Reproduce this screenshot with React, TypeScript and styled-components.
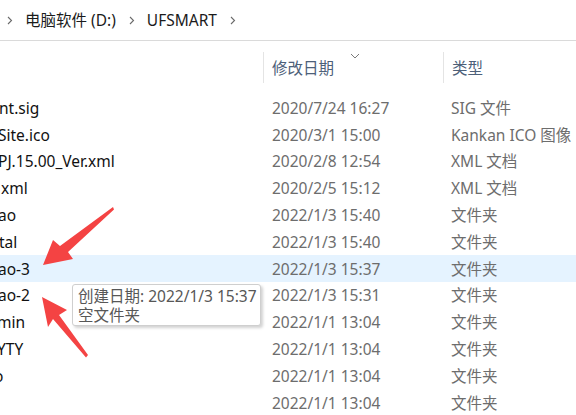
import React from "react";
import styled, { createGlobalStyle } from "styled-components";

const Global = createGlobalStyle`
  html, body { margin: 0; padding: 0; background: #fff; }
  body { overflow: hidden; font-family: "Noto Sans", "Noto Sans CJK SC", sans-serif; }
`;

const Page = styled.div`
  position: relative;
  width: 576px;
  height: 415px;
  overflow: hidden;
  background: #fff;
  display: flex;
  flex-direction: column;
`;

const Breadcrumb = styled.div`
  height: 41px;
  flex: none;
  border-bottom: 1px solid #dadada;
  display: flex;
  align-items: center;
  padding-left: 7px;
  box-sizing: border-box;
`;

const Crumb = styled.span`
  font-size: 15.5px;
  color: #1b1b1b;
  padding: 0 13px 0 12px;
  line-height: 20px;
`;

const Chevron = () => (
  <svg width="6" height="9" viewBox="0 0 6 9" style={{ flex: "none" }}>
    <path d="M1 1 L4.5 4.5 L1 8" fill="none" stroke="#6a6a6a" strokeWidth="1.1" />
  </svg>
);

const HeaderRow = styled.div`
  height: 53.5px;
  flex: none;
  display: grid;
  grid-template-columns: 263px 180px 1fr;
  align-items: start;
  padding-top: 11px;
  box-sizing: border-box;
`;

const HeaderCell = styled.div<{ $sep?: boolean }>`
  position: relative;
  height: 31px;
  display: flex;
  align-items: center;
  padding-left: 8px;
  border-left: ${(p) => (p.$sep ? "1px solid #e4e4e4" : "none")};
  font-size: 15.5px;
  color: #4d6079;
`;

const SortMark = styled.svg`
  position: absolute;
  left: 86px;
  top: 1px;
`;

const Rows = styled.div`
  display: flex;
  flex-direction: column;
`;

const Row = styled.div<{ $hl?: boolean }>`
  height: 26.8px;
  display: grid;
  grid-template-columns: 263px 180px 1fr;
  align-items: center;
  background: ${(p) => (p.$hl ? "#e5f3ff" : "transparent")};
  font-size: 15.5px;
  line-height: 20px;
`;

const NameCell = styled.div`
  overflow: hidden;
  white-space: nowrap;
  color: #111;
`;

const NameText = styled.span<{ $shift: number }>`
  display: inline-block;
  margin-left: ${(p) => p.$shift}px;
`;

const InfoCell = styled.div<{ $pad: number }>`
  padding-left: ${(p) => p.$pad}px;
  color: #6d6d6d;
  white-space: nowrap;
`;

const Tooltip = styled.div`
  position: absolute;
  left: 72px;
  top: 284px;
  width: 189px;
  height: 42px;
  box-sizing: border-box;
  background: #fff;
  border: 1px solid #cfcfcf;
  border-radius: 3px;
  box-shadow: 2px 2px 3px rgba(0, 0, 0, 0.18);
  padding: 2px 0 0 5px;
  font-size: 15.5px;
  line-height: 19px;
  color: #575757;
  white-space: nowrap;
`;

const Overlay = styled.svg`
  position: absolute;
  left: 0;
  top: 0;
  pointer-events: none;
`;

const rows = [
  { name: "nt.sig", shift: -1, date: "2020/7/24 16:27", type: "SIG 文件" },
  { name: "Site.ico", shift: -2, date: "2020/3/1 15:00", type: "Kankan ICO 图像" },
  { name: "PJ.15.00_Ver.xml", shift: -2, date: "2020/2/8 12:54", type: "XML 文档" },
  { name: "xml", shift: 1, date: "2020/2/5 15:12", type: "XML 文档" },
  { name: "ao", shift: -2, date: "2022/1/3 15:40", type: "文件夹" },
  { name: "tal", shift: -1, date: "2022/1/3 15:40", type: "文件夹" },
  { name: "ao-3", shift: -2, date: "2022/1/3 15:37", type: "文件夹", hl: true },
  { name: "ao-2", shift: -2, date: "2022/1/3 15:31", type: "文件夹" },
  { name: "min", shift: -3, date: "2022/1/1 13:04", type: "文件夹" },
  { name: "YTY", shift: -3, date: "2022/1/1 13:04", type: "文件夹" },
  { name: "o", shift: -6, date: "2022/1/1 13:04", type: "文件夹" },
  { name: "", shift: 0, date: "2022/1/1 13:04", type: "文件夹" },
];

export default function App() {
  return (
    <>
      <Global />
      <Page>
        <Breadcrumb>
          <Chevron />
          <Crumb>电脑软件 (D:)</Crumb>
          <Chevron />
          <Crumb>UFSMART</Crumb>
          <Chevron />
        </Breadcrumb>
        <HeaderRow>
          <div />
          <HeaderCell $sep>
            修改日期
            <SortMark width="10" height="6" viewBox="0 0 10 6">
              <path d="M1 1 L5 5 L9 1" fill="none" stroke="#7a7a7a" strokeWidth="1" />
            </SortMark>
          </HeaderCell>
          <HeaderCell $sep>类型</HeaderCell>
        </HeaderRow>
        <Rows>
          {rows.map((r, i) => (
            <Row key={i} $hl={r.hl}>
              <NameCell>
                <NameText $shift={r.shift}>{r.name}</NameText>
              </NameCell>
              <InfoCell $pad={9}>{r.date}</InfoCell>
              <InfoCell $pad={8}>{r.type}</InfoCell>
            </Row>
          ))}
        </Rows>
        <Tooltip>
          <div>创建日期: 2022/1/3 15:37</div>
          <div>空文件夹</div>
        </Tooltip>
        <Overlay width="576" height="415" viewBox="0 0 576 415">
          <path
            d="M113 207 L114 209.5 L68 252 L73 259 L43 265 L53 240 L60 246 Z"
            fill="#f44343"
          />
          <path
            d="M42 297 L67 310 L59 315 L88 355 L86 357.5 L53 319 L48 327 Z"
            fill="#f44343"
          />
        </Overlay>
      </Page>
    </>
  );
}
